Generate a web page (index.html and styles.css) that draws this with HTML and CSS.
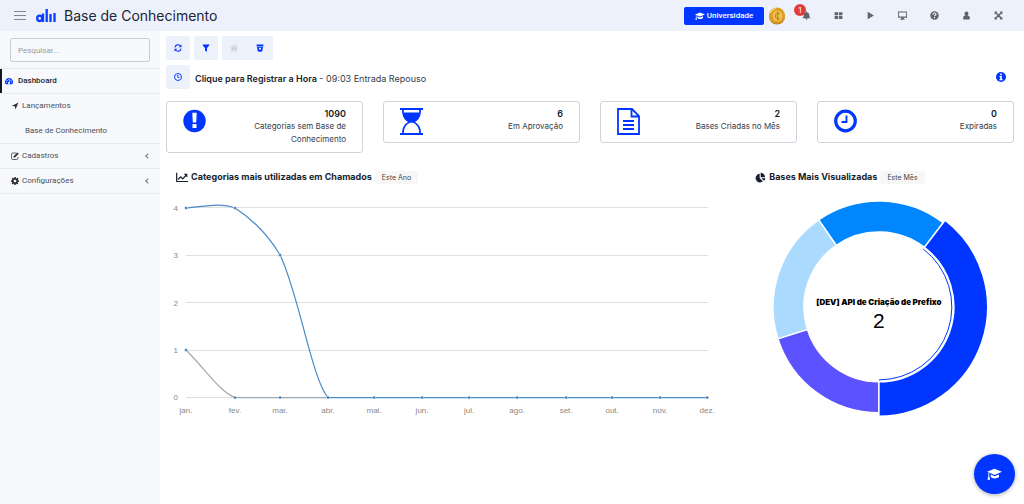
FILE: index.html
```html
<!DOCTYPE html>
<html lang="pt-BR">
<head>
<meta charset="utf-8">
<title>Base de Conhecimento</title>
<meta name="viewport" content="width=device-width, initial-scale=1">
<link rel="stylesheet" href="styles.css">
</head>
<body>
<svg class="sprite" aria-hidden="true">
  <symbol id="cap" viewBox="0 0 20 16"><path d="M10 1 0 5l10 4.200L20 5zM5 8.500v3.500c2 2.500 8.500 2.500 11 0V8.500l-6 2.500zM1.800 6.500h1.200v4.500l1.200 4.500H.6l1.200-4.500z"/></symbol>
</svg>
<header class="topbar">
  <button class="menu" aria-label="Menu"><svg viewBox="0 0 14 12"><path d="M1 1.500h12M1 5.500h12M1 9.500h12" fill="none" stroke="#85888e" stroke-width="1.200"/></svg></button>
  <svg class="logo" viewBox="0 0 20 14"><g fill="none" stroke="#0a3dff" stroke-width="2.300"><ellipse cx="3.700" cy="9.300" rx="2.500" ry="2.700"/><path d="M7 4.500V13M10.700 0v13M14.500 5v8M18.500 4v9"/></g></svg>
  <h1 class="title">Base de Conhecimento</h1>
  <div class="tools">
    <button class="university"><svg class="ic-cap" viewBox="0 0 20 16"><use href="#cap"/></svg>Universidade</button>
    <button class="coin" aria-label="Moedas"><svg viewBox="0 0 18 18"><ellipse cx="9" cy="9.500" rx="8" ry="8" fill="#b77b18"/><ellipse cx="9" cy="8.500" rx="8" ry="8" fill="#e3a328"/><ellipse cx="9.500" cy="9" rx="5.800" ry="6.200" fill="#f0c04a" stroke="#cf8d1c"/><path d="M11.800 6.800c-2-1.600-4.300 0-4.300 2.300s2.300 3.900 4.300 2.300M9.700 4.500v9" fill="none" stroke="#b57a1c"/><path d="M2.500 6c1-2.500 3-4 5-4.300" stroke="#ffe9a0" fill="none"/></svg></button>
    <button class="tool" aria-label="Notificações, 1 nova"><svg viewBox="0 0 16 16"><path d="M8 1c1 0 1.300.7 1.300 1.500C12 3 13 5 13 8c0 2.500 1 3.500 2.500 5h-15C2 11.500 3 10.500 3 8c0-3 1-5 3.700-5.500C6.700 1.700 7 1 8 1zM6 13.500h4c0 2.500-4 2.500-4 0z"/></svg><span class="badge">1</span></button>
    <button class="tool" aria-label="Aplicativos"><svg viewBox="0 0 16 16"><path d="M1 2h6.300v5.500H1zM8.700 2H15v5.500H8.700zM1 8.800h6.300v5.500H1zM8.700 8.800H15v5.500H8.700z"/></svg></button>
    <button class="tool" aria-label="Iniciar"><svg viewBox="0 0 16 16"><path d="M3 1.500 14 8 3 14.500z"/></svg></button>
    <button class="tool" aria-label="Tela"><svg viewBox="0 0 16 16"><path fill-rule="evenodd" d="M0 1h16v11h-6l.5 2H12v1.500H4V14h1.500l.5-2H0zm1.500 1.500v7.300h13V2.500z"/></svg></button>
    <button class="tool" aria-label="Ajuda"><svg viewBox="0 0 16 16"><circle cx="8" cy="8" r="7.500"/><path d="M5.300 6.200C5.500 2.800 10.900 2.900 10.700 6c-.1 1.700-2.700 1.700-2.700 3.500M8 10.500v2.200" fill="none" stroke="#edf1fb" stroke-width="2"/></svg></button>
    <button class="tool" aria-label="Usuário"><svg viewBox="0 0 16 16"><path d="M8 1c4.500 0 4 5.500 1.800 7.200 3 .3 4.200 2 4.200 5 0 1.300-.7 1.800-1.800 1.800H3.800C2.700 15 2 14.500 2 13.200c0-3 1.200-4.700 4.200-5C4 6.500 3.500 1 8 1z"/></svg></button>
    <button class="tool" aria-label="Expandir"><svg viewBox="0 0 16 16"><path d="M1 1h5L4.500 2.500 8 6l3.500-3.500L10 1h5v5l-1.500-1.500L10 8l3.500 3.500L15 10v5h-5l1.500-1.500L8 10l-3.500 3.500L6 15H1v-5l1.500 1.500L6 8 2.500 4.500 1 6z"/></svg></button>
  </div>
</header>
<div class="shell">
  <nav class="sidebar">
    <div class="search"><input type="search" placeholder="Pesquisar..." aria-label="Pesquisar"></div>
    <ul class="nav">
      <li class="group active"><a href="#"><svg viewBox="0 0 16 16"><path d="M8 2a8 8 0 0 0-6.600 12.500h13.200A8 8 0 0 0 8 2z"/><g fill="#fff"><circle cx="3" cy="10" r="1.100"/><circle cx="4.500" cy="6.400" r="1.100"/><circle cx="8" cy="4.800" r="1.100"/><circle cx="11.700" cy="6.400" r="1.100"/><circle cx="13" cy="10" r="1.100"/><path d="m9 6 1 .3-1 4a2 2 0 1 1-1.500-.2z"/></g></svg>Dashboard</a></li>
      <li class="group"><a href="#"><svg viewBox="0 0 16 16"><path d="M15 1 9 15l-1.500-6.500L1 8z"/></svg>Lançamentos</a>
        <a class="sub" href="#">Base de Conhecimento</a></li>
      <li class="group"><a href="#"><svg viewBox="0 0 16 16"><path d="M11 2H3.500Q1 2 1 4.500v8Q1 15 3.500 15h8q2.500 0 2.500-2.500V10" fill="none" stroke="currentColor" stroke-width="1.500"/><path d="m13 1 2.500 2.500L8 11H5V8.500z"/></svg>Cadastros<span class="chevron"></span></a></li>
      <li class="group"><a href="#"><svg viewBox="0 0 16 16"><path fill-rule="evenodd" d="M6.700 0h2.600l.5 2.200 1.400.6 1.900-1.200L15 3.400l-1.200 1.900.5 1.200 1.700.3v2.500l-2 .5-.6 1.400 1.200 1.900-1.800 1.800-1.900-1.200-1.300.6L9.200 16H6.700l-.4-1.900-1.300-.5-1.900 1.200-1.800-1.800 1.200-1.900-.6-1.300L0 9.300V6.700l2-.4.6-1.400-1.200-1.800 1.800-1.800 1.900 1.200 1.200-.5zM8 5.300a2.700 2.700 0 1 0 0 5.400 2.700 2.700 0 0 0 0-5.400z"/></svg>Configurações<span class="chevron"></span></a></li>
    </ul>
  </nav>
  <main class="main">
    <div class="actions">
      <button class="action" aria-label="Atualizar"><svg viewBox="0 0 16 16"><path d="M2 7c.5-6 8-7 11-3M14 9c-.5 6-8 7-11 3" fill="none" stroke="currentColor" stroke-width="2.200"/><path d="M15 1v5.500H9.500zM1 15V9.500h5.500z"/></svg></button>
      <button class="action" aria-label="Filtrar"><svg viewBox="0 0 16 16"><path d="M1.500 1h13v2L10 8v7.500L6 13V8L1.500 3z"/></svg></button>
      <div class="action-group">
        <button class="action" aria-label="Início" disabled><svg viewBox="0 0 16 16"><path d="M8 1 0 8l1 1 7-6 7 6 1-1-2.500-2.200V2h-2v2zM8 4.500 2.500 9v6h4v-4h3v4h4V9z"/></svg></button>
        <button class="action" aria-label="Recolher"><svg viewBox="0 0 16 16"><path fill-rule="evenodd" d="M1 1h14l-.4 4H1.400zM2 6h12l-1.500 8-2 1.500h-5l-2-1.500zm4 1.500v3.500h4V7.500z"/></svg></button>
      </div>
    </div>
    <div class="clockline">
      <button class="action" aria-label="Registrar hora"><svg viewBox="0 0 16 16"><g fill="none" stroke="currentColor" stroke-width="1.900"><circle cx="8" cy="8" r="7"/><path d="M7.500 4v4.500H11"/></g></svg></button>
      <p><strong>Clique para Registrar a Hora</strong> - 09:03 Entrada Repouso</p>
      <button class="info" aria-label="Informações"><svg viewBox="0 0 16 16"><circle cx="8" cy="8" r="8" fill="#0036ff"/><path d="M6.700 2.500h2.600V5H6.700zM5.500 6.200h3.800v5h1.200V13h-5v-1.800h1.200V8H5.500z" fill="#fff"/></svg></button>
    </div>
    <section class="cards">
      <article class="card"><svg viewBox="0 0 24 28"><circle cx="11.500" cy="13" r="11.200"/><path d="M9.300 4.800h4.400l-.5 9.700H9.800zM9.500 16h4v4h-4z" fill="#fff"/></svg><p><strong>1090</strong>Categorias sem Base de Conhecimento</p></article>
      <article class="card"><svg viewBox="0 0 24 28"><path d="M0 0h23v2h-2c0 6-2 9.500-6 12 4 2.500 6 6 6 11h2v2H0v-2h2c0-5 2-8.500 6-11C4 11.500 2 8 2 2H0zm3.800 2v2.500h15.400V2zm6 12.700c-4 2-6 5.500-6 10.300h15.400c0-4.800-2-8.300-6-10.300z" fill-rule="evenodd"/></svg><p><strong>6</strong>Em Aprovação</p></article>
      <article class="card"><svg viewBox="0 0 24 28"><path d="M1 1h14l7 7v18H1zM14.500 1v7.500H22M6 13h11M6 17h11M6 21h11" fill="none" stroke="currentColor" stroke-width="1.800"/></svg><p><strong>2</strong>Bases Criadas no Mês</p></article>
      <article class="card"><svg viewBox="0 0 24 28"><g fill="none" stroke="currentColor"><circle cx="11.500" cy="13" r="9.800" stroke-width="3.200"/><path d="M12.500 7.500V14h-5" stroke-width="1.800"/></g></svg><p><strong>0</strong>Expiradas</p></article>
    </section>
    <section class="charts">
      <div class="panel">
        <h2><svg viewBox="0 0 18 16"><path d="M1 1v13h17M3 11l4-4 3 3 5-5" fill="none" stroke="currentColor" stroke-width="1.800"/><path d="M11.500 2.500H17V8z"/></svg>Categorias mais utilizadas em Chamados<span class="tag">Este Ano</span></h2>
        <svg class="chart" viewBox="0 0 578 230" role="img" aria-label="Categorias mais utilizadas em Chamados">
          <path d="M20 17.500h522M20 65.500h522M20 112.500h522M20 160.500h522M20 207.500h522" stroke="#dfdfdf"/>
          <path d="M20 160C40 180 54 202 69 207.500H162" fill="none" stroke="#9da9b3" stroke-width="1.200"/>
          <path d="M20 18C36 17 54 12 69 18C86 29 101 43 114 65C132 101 146 190 162 207.500H541" fill="none" stroke="#4a8ac4" stroke-width="1.200"/>
          <g fill="#2d71ab" stroke="#fff" stroke-width=".5"><circle cx="20" cy="18" r="1.500"/><circle cx="69" cy="18" r="1.500"/><circle cx="114" cy="65" r="1.500"/><circle cx="20" cy="160" r="1.500"/><circle cx="69" cy="207.500" r="1.500"/><circle cx="114" cy="207.500" r="1.500"/><circle cx="162" cy="207.500" r="1.500"/><circle cx="208" cy="207.500" r="1.500"/><circle cx="256" cy="207.500" r="1.500"/><circle cx="303" cy="207.500" r="1.500"/><circle cx="351" cy="207.500" r="1.500"/><circle cx="400" cy="207.500" r="1.500"/><circle cx="446" cy="207.500" r="1.500"/><circle cx="494" cy="207.500" r="1.500"/><circle cx="541" cy="207.500" r="1.500"/></g>
          <g class="axis y"><text x="12" y="21">4</text><text x="12" y="68">3</text><text x="12" y="116">2</text><text x="12" y="163">1</text><text x="12" y="210">0</text></g>
          <g class="axis"><text x="20" y="223">jan.</text><text x="69" y="223">fev.</text><text x="114" y="223">mar.</text><text x="162" y="223">abr.</text><text x="208" y="223">mai.</text><text x="256" y="223">jun.</text><text x="303" y="223">jul.</text><text x="351" y="223">ago.</text><text x="400" y="223">set.</text><text x="446" y="223">out.</text><text x="494" y="223">nov.</text><text x="541" y="223">dez.</text></g>
        </svg>
      </div>
      <div class="panel">
        <h2><svg viewBox="0 0 18 16"><path d="M8.500 2.500V9l4.800 4.800A6.500 6.500 0 1 1 8.500 2.500zM10 1a6.500 6.500 0 0 1 6.500 6.500H10zM11 9h6a6 6 0 0 1-2 4z"/></svg>Bases Mais Visualizadas<span class="tag">Este Mês</span></h2>
        <svg class="chart" viewBox="0 0 270 230" role="img" aria-label="Bases Mais Visualizadas">
          <g stroke="#fff" stroke-width="1.500">
            <path fill="#0087ff" d="M74.600 29.900A106 106 0 0 1 199.300 32.700L180.500 57.400A75 75 0 0 0 92.300 55.400z"/>
            <path fill="#aadbff" d="M34 149A106 106 0 0 1 74.600 29.900L92.300 55.400A75 75 0 0 0 63.500 139.700z"/>
            <path fill="#5d52ff" d="M135 223A106 106 0 0 1 34 149L63.500 139.700A75 75 0 0 0 135 192z"/>
            <path fill="#0036ff" d="M201.200 30.300A109.500 109.500 0 0 1 135 226.500V192A75 75 0 0 0 180.500 57.400z"/>
          </g>
          <path d="M179.300 59A73 73 0 0 1 135 190" fill="none" stroke="#0036ff"/>
          <text class="donut-name" x="135" y="115">[DEV] API de Criação de Prefixo</text>
          <text class="donut-value" x="135" y="138">2</text>
        </svg>
      </div>
    </section>
  </main>
</div>
<button class="fab" aria-label="Universidade"><svg viewBox="0 0 20 16"><use href="#cap"/></svg></button>
</body>
</html>
```
FILE: styles.css
```css
* { box-sizing: border-box; }
body { margin: 0; min-height: 100vh; display: flex; flex-direction: column; background: #fff; color: #343c49; font: 9px/12px Inter, "Liberation Sans", sans-serif; }
svg { display: block; fill: currentColor; flex: none; }
button { border: 0; padding: 0; background: none; color: inherit; font: inherit; cursor: pointer; display: flex; align-items: center; justify-content: center; }
a { color: inherit; text-decoration: none; }
h1, h2, p, ul { margin: 0; padding: 0; }
.sprite { position: absolute; width: 0; height: 0; }

.topbar { display: flex; align-items: center; height: 31px; padding: 0 8px 0 13px; background: #edf1fb; }
.menu svg { width: 14px; height: 12px; }
.logo { width: 20px; height: 14px; margin: 0 8px 0 9px; }
.title { font-size: 14px; line-height: 20px; font-weight: 400; color: #1b2437; }
.tools { display: flex; align-items: center; margin-left: auto; color: #626468; }
.university { height: 18px; width: 80px; gap: 2px; border-radius: 2px; background: #0036ff; color: #fff; font-size: 8px; font-weight: 500; font-family: Roboto, sans-serif; }
.ic-cap { width: 10px; height: 8px; }
.coin { margin: 0 11px 0 4px; }
.coin svg { width: 18px; height: 18px; }
.tool { position: relative; width: 18px; height: 20px; margin-right: 14px; }
.tool:last-child { margin-right: 9px; }
.tool svg { width: 9px; height: 9px; }
.badge { position: absolute; left: -3px; top: -2px; width: 12px; height: 12px; border-radius: 50%; background: #e33b3b; color: #fff; font-size: 8px; line-height: 12px; }

.shell { display: flex; flex: 1; }
.sidebar { width: 160px; flex: none; background: #f8f9fd; color: #4b5058; font-size: 8px; font-family: Roboto, "Liberation Sans", sans-serif; }
.search { padding: 7px 10px 6px; }
.search input { display: block; width: 100%; height: 24px; padding: 0 7px; border: 1px solid #c9cdd3; border-radius: 2px; background: transparent; font: inherit; }
.search input::placeholder { color: #999da3; }
.nav { list-style: none; border-bottom: 1px solid #e9ebef; }
.group { border-top: 1px solid #e9ebef; }
.group a { display: flex; align-items: center; height: 24px; padding: 0 10px 0 11px; gap: 3px; }
.group svg { width: 8px; height: 8px; color: #333; }
.group .sub { height: 25px; padding-left: 25px; }
.group.active a { border-left: 2px solid #111827; padding-left: 3px; gap: 5px; color: #171e2e; font-weight: 500; }
.group.active svg { color: #0036ff; }
.chevron { width: 4px; height: 4px; margin-left: auto; border: solid #777; border-width: 0 0 1px 1px; transform: rotate(45deg); }

.main { flex: 1; min-width: 0; padding: 5px 10px 10px 6px; }
.actions { display: flex; gap: 4px; }
.action { width: 24px; height: 24px; border-radius: 2px; background: #edf1fb; color: #0036ff; }
.action svg { width: 8px; height: 8px; }
.action:disabled { color: #cfd3d9; }
.action-group { display: flex; gap: 2px; padding-right: 1px; border-radius: 2px; background: #edf1fb; }
.clockline { display: flex; align-items: center; gap: 5px; margin-top: 5px; }
.clockline p { padding-top: 4px; }
strong { font-weight: 600; color: #171e2e; }
.info { margin-left: auto; margin-right: 8px; }
.info svg { width: 10px; height: 10px; }

.cards { display: grid; grid-template-columns: repeat(4, 1fr); gap: 20px; align-items: start; margin-top: 12px; }
.card { display: flex; justify-content: space-between; padding: 6px 16px; border: 1px solid #ced3dc; border-radius: 3px; font-size: 8px; }
.card svg { width: 24px; height: 28px; color: #0036ff; }
.card p { width: 112px; text-align: right; line-height: 13px; }
.card strong { display: block; font-size: 9px; line-height: 12px; }

.charts { display: grid; grid-template-columns: 15fr 7fr; margin-top: 17px; }
.panel h2 { display: flex; align-items: center; height: 14px; padding-left: 10px; color: #171e2e; font-size: 9px; line-height: 12px; font-weight: 700; }
.panel h2 svg { width: 12px; height: 11px; margin-right: 3px; }
.tag { margin-left: 3px; padding: 0 7px; border-radius: 2px; background: #f8f7f8; color: #444; font-size: 7px; line-height: 13px; font-weight: 400; }
.chart { width: 100%; height: auto; margin-top: 6px; }
.axis { fill: #888; font: 8px "Liberation Sans", sans-serif; text-anchor: middle; }
.axis.y { text-anchor: end; }
.donut-name { fill: #000; font: 900 8px Inter, sans-serif; text-anchor: middle; }
.donut-value { fill: #000; font: 21px "Liberation Sans", sans-serif; text-anchor: middle; }

.fab { position: fixed; right: 9px; bottom: 10px; width: 41px; height: 40px; border-radius: 50%; background: #0036ff; color: #fff; box-shadow: 0 1px 4px #0005; }
.fab svg { width: 15px; height: 12px; }
```
